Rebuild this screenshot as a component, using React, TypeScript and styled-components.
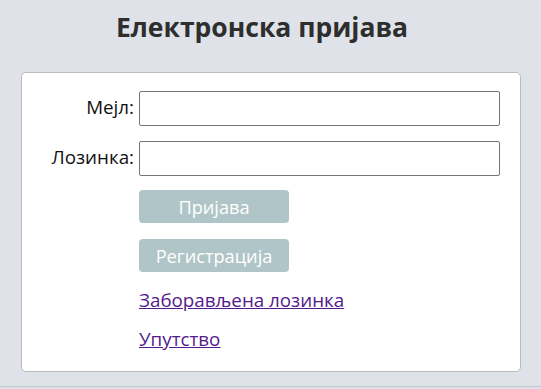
import React from 'react'
import styled, { createGlobalStyle } from 'styled-components'

const GlobalStyle = createGlobalStyle`
  html, body {
    margin: 0;
    padding: 0;
    background: #dfe2e9;
  }
  body {
    font-family: "Open Sans", "Noto Sans", sans-serif;
  }
`

const Page = styled.div`
  height: 387px;
  border-bottom: 1px solid #c3c6cc;
  padding: 0 20px 0 21px;
  box-sizing: border-box;
`

const Title = styled.h1`
  margin: 0;
  padding: 9px 18px 0 0;
  height: 72px;
  box-sizing: border-box;
  text-align: center;
  font-size: 26.5px;
  font-weight: 700;
  color: #2e2e2e;
`

const Card = styled.div`
  width: 500px;
  height: 300px;
  box-sizing: border-box;
  background: #fff;
  border: 1px solid #bcbcbc;
  border-radius: 5px;
  padding: 18px 20px 0 0;
  display: grid;
  grid-template-columns: 112px 361px;
  align-content: start;
  column-gap: 5px;
  row-gap: 15px;
  align-items: center;
`

const Label = styled.label`
  text-align: right;
  font-size: 18.8px;
  color: #111;
  margin-top: -4px;
`

const Input = styled.input`
  height: 35px;
  width: 361px;
  box-sizing: border-box;
  border: 1px solid #767676;
  border-radius: 2px;
  background: #fff;
  outline: none;
`

const Actions = styled.div`
  grid-column: 2;
  display: flex;
  flex-direction: column;
  align-items: flex-start;
  margin-top: -1px;
`

const Button = styled.button<{ $gap?: number }>`
  width: 150px;
  height: 33px;
  margin-top: ${({ $gap }) => $gap ?? 0}px;
  border: none;
  border-radius: 4px;
  background: #b0c5c7;
  color: #fff;
  font-family: inherit;
  font-size: 18.2px;
  padding: 0;
`

const LinkItem = styled.a<{ $gap: number }>`
  margin-top: ${({ $gap }) => $gap}px;
  font-size: 18.8px;
  color: #551a8b;
  text-decoration: underline;
  line-height: 22px;
`

const App: React.FC = () => (
  <>
    <GlobalStyle />
    <Page>
      <Title>Електронска пријава</Title>
      <Card>
        <Label htmlFor="mail">Мејл:</Label>
        <Input id="mail" type="text" />
        <Label htmlFor="pass">Лозинка:</Label>
        <Input id="pass" type="password" />
        <Actions>
          <Button>Пријава</Button>
          <Button $gap={16}>Регистрација</Button>
          <LinkItem $gap={17} href="#">Заборављена лозинка</LinkItem>
          <LinkItem $gap={17} href="#">Упутство</LinkItem>
        </Actions>
      </Card>
    </Page>
  </>
)

export default App
